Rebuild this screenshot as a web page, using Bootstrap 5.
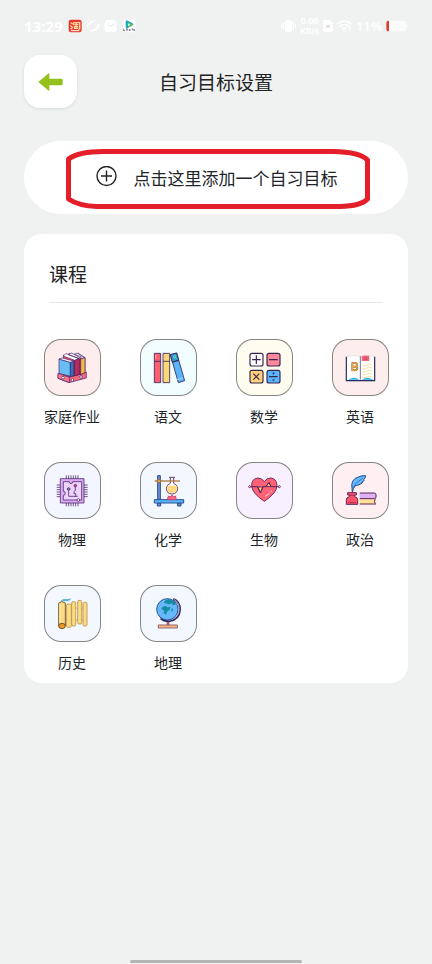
<!DOCTYPE html>
<html lang="zh-CN">
<head>
<meta charset="utf-8">
<meta name="viewport" content="width=device-width, initial-scale=1">
<title>自习目标设置</title>
<link href="https://cdn.jsdelivr.net/npm/bootstrap@5.3.0/dist/css/bootstrap.min.css" rel="stylesheet">
<style>
  body { background: #f0f2f1; color: #222; font-family: "Noto Sans CJK SC", sans-serif; }
  button { color: inherit; }
  .status { height: 51px; color: #fff; font-family: "Open Sans", "Noto Sans CJK SC", sans-serif; }
  .clock { font-size: 15px; line-height: 20px; font-weight: 700; }
  .rate { font-family: Inter, sans-serif; font-size: 8px; line-height: 10px; font-weight: 700; }
  .charge { font-size: 13px; line-height: 20px; font-weight: 600; }
  .topbar { display: grid; grid-template-columns: 53px 1fr 53px; margin-top: 4px; }
  .back-btn { width: 53px; height: 53px; border-radius: 16px; box-shadow: 0 1px 3px rgba(40, 60, 80, .12); }
  .page-title { font-size: 19px; line-height: 28px; font-weight: 400; }
  .add-btn { height: 73px; margin-top: 33px; font-size: 17px; line-height: 24px; gap: 16px; }
  .course-panel { margin-top: 20px; border-radius: 18px; padding-bottom: 10px; }
  .panel-head { margin: 0 25px; padding-top: 26px; height: 69px; border-bottom: 1px solid #e6e7e7; }
  .panel-title { font-size: 19px; line-height: 28px; font-weight: 400; }
  .courses { padding-top: 36px; row-gap: 35px; }
  .course { font-size: 14px; line-height: 22px; gap: 9px; }
  .tile { width: 57px; height: 57px; border-radius: 17px; box-shadow: inset 0 0 0 1px #858585; }
  .tile svg { display: block; width: 57px; height: 57px; stroke-linejoin: round; }
  .t-rose { background: #fdeeed; } .t-mint { background: #f1fdff; } .t-cream { background: #fffdf0; }
  .t-blue { background: #f3f8ff; } .t-lilac { background: #f8f0ff; } .t-pink { background: #fdeff2; } .t-peri { background: #f4f6ff; }
  .home-bar { width: 45%; height: 3px; margin-bottom: 1px; background: #b3b5b5; }
</style>
<script src="https://cdn.jsdelivr.net/npm/bootstrap@5.3.0/dist/js/bootstrap.bundle.min.js" defer></script>
</head>
<body>
<div class="min-vh-100 d-flex flex-column px-4">
  <div class="status d-flex align-items-center justify-content-between">
    <div class="d-flex align-items-center">
      <span class="clock me-1">13:29</span>
      <svg width="70" height="16" viewBox="0 0 210 48" aria-hidden="true">
        <rect x="5" y="5" width="39" height="38" rx="7" fill="#e5382c"/>
        <path d="M11 14l6 4M10 23l6 4M11 34l6-6M21 12c-2 5 0 7-3 9M21 14h17v19l-5 1M22 20h12M22 26h12M28 15v15M22 25v6h11" fill="none" stroke="#ffd39a" stroke-width="4"/>
        <path d="M12 38h25" stroke="#fff" stroke-width="3"/>
        <path d="M61 30c-4-14 12-26 27-23-10 4-20 12-27 23zm4 8c16 0 26-10 31-25 8 16-11 34-31 25z" fill="#fff"/>
        <rect x="113" y="6" width="36" height="36" rx="8" fill="#fff"/>
        <path d="M123 17c2 9 14 9 16 0" fill="none" stroke="#dfe2e1" stroke-width="3"/>
        <rect x="168" y="5" width="38" height="38" rx="7" fill="#fff"/>
        <path d="M176 8q3-2 6 0l15 8q4 3 0 6l-15 8q-6 2-6-3z" fill="#18a7d8"/><path d="M181 13l17 6-16 9z" fill="#56c42b"/><path d="M183 16l7 4-7 4z" fill="#fff"/>
        <path d="M170 32v6h4M177 33h6m-3 0v6M186 34l4 4m0-5l-4 6M194 33h4v5m3-5v4h3" fill="none" stroke="#333d4a" stroke-width="2"/>
      </svg>
    </div>
    <div class="d-flex align-items-center gap-1">
      <svg width="15" height="14" viewBox="0 0 45 42" fill="#fff" aria-hidden="true"><rect x="12" y="3" width="21" height="36" rx="5"/><path d="M6 10h4v22H6zM0 16h4v10H0zM35 10h4v22h-4zM41 16h4v10h-4z"/></svg>
      <div class="rate text-center"><div>0.00</div><div>KB/s</div></div>
      <svg width="10" height="12" viewBox="0 0 30 36" aria-hidden="true"><path d="M5 0h15l10 9v22q0 5-5 5H5q-5 0-5-5V5q0-5 5-5z" fill="#fff"/><path d="M10 14l10 10m0-10L10 24" stroke="#c9cdcc" stroke-width="3"/></svg>
      <svg width="15" height="12" viewBox="0 0 45 36" fill="none" stroke="#fff" stroke-width="5" aria-hidden="true"><path d="M2 12Q22-6 43 12M8 20Q22 7 36 20M15 27Q22 21 29 27"/><circle cx="22" cy="32" r="1"/><path d="M38 21v12" stroke-dasharray="5 3"/></svg>
      <span class="charge">11%</span>
      <svg width="22" height="12" viewBox="0 0 66 36" aria-hidden="true"><rect x="2" y="2" width="58" height="32" rx="8" fill="#fbfbfb"/><path d="M61 12q5 1 5 6t-5 6z" fill="#fbfbfb"/><path d="M9 2v32Q1 34 1 27V9q0-7 8-7z" fill="#e13b33"/></svg>
    </div>
  </div>

  <header class="topbar align-items-center">
    <button type="button" class="back-btn btn bg-white border-0 p-0 d-flex align-items-center justify-content-center" aria-label="返回">
      <svg width="25" height="18" viewBox="0 0 75 54" aria-hidden="true"><path d="M1 27L32 1q2-1 2 2v14h36q4 0 4 4v12q0 4-4 4H34v14q0 3-2 2z" fill="#94c11b"/></svg>
    </button>
    <h1 class="page-title text-center mb-0">自习目标设置</h1>
  </header>

  <main>
    <button type="button" class="add-btn btn bg-white border-0 rounded-pill w-100 p-0 position-relative d-flex align-items-center justify-content-center">
      <svg width="23" height="23" viewBox="0 0 23 23" fill="none" stroke="#222" aria-hidden="true"><circle cx="11.500" cy="10" r="9.500" stroke-width="1.400"/><path d="M6 10h11M11.500 4.500v11" stroke-width="1.400"/></svg>
      <span>点击这里添加一个自习目标</span>
      <svg class="position-absolute top-0 start-0 w-100 h-100" viewBox="0 0 384 73" fill="none" stroke="#e51f29" stroke-width="5" stroke-linejoin="round" aria-hidden="true"><path d="M44.500 18Q55 10.500 79 10.500H309Q336 11 343.500 19V58Q337 65 316 65.500H73Q55 65 44.500 58Z"/></svg>
    </button>

    <section class="course-panel bg-white">
      <div class="panel-head"><h2 class="panel-title mb-0">课程</h2></div>
      <div class="courses row row-cols-4 gx-0">
        <div class="col"><button type="button" class="course btn border-0 p-0 w-100 d-flex flex-column align-items-center">
          <span class="tile t-rose"><svg viewBox="40 27 171 171" stroke="#46206b" stroke-width="2" aria-hidden="true">
            <path d="M82 131l33 11 52-16v18l-52 14-33-13z" fill="#f4697a"/><path d="M133 74l10-4 20 13v45l-13 6z" fill="#f4b63f"/><path d="M115 70l18 7 18 8v46l-15 6-19-50z" fill="#bd2f56"/><path d="M150 87l13-4v45l-13 5z" fill="#f3b941"/><path d="M98 75l34 15v47l-16 3-18-7z" fill="#ef536d"/><path d="M132 90l14-4v46l-14 6z" fill="#bf2b58"/><path d="M97 78l9-7 38 14-12 6zM113 74l8-5 32 12-7 5zM131 73l8-4 22 13-9 4z" fill="#fff"/><path d="M85 87l34 10v42l-34-9z" fill="#67bdf4"/><path d="M119 97l10-4v43l-10 4z" fill="#237db7"/><path d="M85 87l10-3 34 9-10 4z" fill="#fff"/><path d="M82 130l34 12v16l-34-13z" fill="#ff7887"/><g fill="#fff"><circle cx="97" cy="143" r="4"/><circle cx="125" cy="150" r="4"/><circle cx="151" cy="141" r="4"/></g>
          </svg></span><span>家庭作业</span></button></div>
        <div class="col"><button type="button" class="course btn border-0 p-0 w-100 d-flex flex-column align-items-center">
          <span class="tile t-mint"><svg viewBox="327 27 171 171" stroke="#3a245d" stroke-width="2.500" aria-hidden="true">
            <path d="M370 70h19v88h-19z" fill="#fb5e6d"/><path d="M396 70h20v88h-20z" fill="#fbd773"/><path d="M418 74l19-5 24 83-19 6z" fill="#58b5f7"/><path d="M418 74l19-5 6 22-19 6z" fill="#2799be"/><path d="M370 94h19M396 94h20M424 96l20-5" fill="none"/><path d="M374 74v13M400 74v13" stroke="#ffb5a8"/><path d="M426 77l5 11M431 74l5 12" stroke="#85d9ea"/><path d="M438 149l17-5" stroke="#bce2ff"/>
          </svg></span><span>语文</span></button></div>
        <div class="col"><button type="button" class="course btn border-0 p-0 w-100 d-flex flex-column align-items-center">
          <span class="tile t-cream"><svg viewBox="40 27 171 171" stroke="#38254e" stroke-width="3.500" aria-hidden="true">
            <rect x="82" y="70" width="39" height="38" rx="6" fill="#fff"/><rect x="133" y="70" width="39" height="38" rx="6" fill="#ff889b"/><rect x="82" y="121" width="39" height="38" rx="6" fill="#ffd17a"/><rect x="133" y="121" width="39" height="38" rx="6" fill="#58b5ff"/>
            <path d="M88 89h26M101 76v26M139 89h26M92 131l18 18m0-18l-18 18M139 140h26" fill="none"/><path d="M150 130h5M150 150h5" stroke-width="5"/>
          </svg></span><span>数学</span></button></div>
        <div class="col"><button type="button" class="course btn border-0 p-0 w-100 d-flex flex-column align-items-center">
          <span class="tile t-rose"><svg viewBox="327 27 171 171" fill="none" aria-hidden="true">
            <path d="M370 79q24-7 42 1 19-8 43-1v73h-85z" fill="#fff" stroke="#d3d7e0" stroke-width="2"/><path d="M370 80v72h85V80" stroke="#292965" stroke-width="3.500"/><path d="M412 79v70" stroke="#56568a" stroke-width="2.500"/><path d="M375 149q20-11 34 0zm41 0q17-11 35 0z" fill="#27b6df"/><path d="M416 79q11-5 23-1v15h-23z" fill="#ef6879"/><path d="M421 83h13M421 88h13" stroke="#c93d66" stroke-width="2"/>
            <path d="M388 99v22h7q8 0 8-6 0-4-5-5 4-1 4-6 0-5-7-5zm0 11h9" stroke="#a76c32" stroke-width="6"/><path d="M388 99v22h7q8 0 8-6 0-4-5-5 4-1 4-6 0-5-7-5zm0 11h9" stroke="#ffc15b" stroke-width="2.500"/>
            <path d="M418 106q8 5 15-1t15 1M418 115q8 5 15-1t15 1M418 124q8 5 15-1t15 1M418 133q8 5 15-1t15 1M418 142q8 3 15-1t15 0" stroke="#f8ce79" stroke-width="2"/>
          </svg></span><span>英语</span></button></div>

        <div class="col"><button type="button" class="course btn border-0 p-0 w-100 d-flex flex-column align-items-center">
          <span class="tile t-peri"><svg viewBox="40 20 171 171" fill="none" stroke="#54306f" stroke-width="2.500" aria-hidden="true">
            <path d="M107 60v11M114 60v11M121 60v11M128 60v11M135 60v11M142 60v11M107 142v11M114 142v11M121 142v11M128 142v11M135 142v11M142 142v11M78 89h11M78 96h11M78 103h11M78 110h11M78 117h11M78 124h11M160 89h11M160 96h11M160 103h11M160 110h11M160 117h11M160 124h11"/>
            <path d="M89 70h71v73H89z" fill="#dcaaf5"/><path d="M98 79h18q0 6 5 6t5-6h27v55H98v-14q6 0 6-6t-6-6z" fill="#eed3ff"/><path d="M114 105v18h27M134 95v9l-4 6v5h5v9"/><circle cx="114" cy="101" r="4" fill="#5484d4"/><circle cx="134" cy="91" r="4" fill="#e74b78"/><circle cx="143" cy="134" r="4" fill="#fff"/>
          </svg></span><span>物理</span></button></div>
        <div class="col"><button type="button" class="course btn border-0 p-0 w-100 d-flex flex-column align-items-center">
          <span class="tile t-blue"><svg viewBox="327 20 171 171" stroke="#284e92" stroke-width="3" aria-hidden="true">
            <path d="M380 61h8v73h-8zM379 143h10v9h-10zM440 143h10v9h-10z" fill="#718fd6"/><path d="M370 133h88v10h-88z" fill="#56b6fa"/>
            <path d="M414 66h18M418 67v17q-11 4-12 15 1 17 17 17t17-17q-1-11-12-15V67" fill="#fff" stroke="#65416e"/><path d="M409 93q14-5 29 0 3 19-15 21-17-1-14-21z" fill="#ffd67a" stroke="none"/><g fill="#fff3bf" stroke="none"><circle cx="419" cy="100" r="2"/><circle cx="428" cy="104" r="2"/><circle cx="425" cy="90" r="2"/></g>
            <path d="M371 77h76" stroke="#ab7b40" stroke-width="4"/><path d="M379 73h10v9h-10z" fill="#d6a461" stroke="#9c6c3e"/><path d="M411 133q-3-6 2-11l5 3 5-6 4 6 6-3q4 7 1 11z" fill="#f76887" stroke="#d34671"/>
          </svg></span><span>化学</span></button></div>
        <div class="col"><button type="button" class="course btn border-0 p-0 w-100 d-flex flex-column align-items-center">
          <span class="tile t-lilac"><svg viewBox="40 20 171 171" stroke="#702d5a" stroke-width="3" aria-hidden="true">
            <path d="M125 138Q87 113 87 90q0-20 19-22 12 0 19 11 7-11 19-11 18 2 19 22 0 23-38 48z" fill="#ff6177"/><path d="M104 95h17l-8 18zM130 93l9-12 6 13z" fill="#ffd168"/><path d="M83 94h22l8 18 8-18h9l9-12 6 12h23" fill="none" stroke="#54255f"/><circle cx="81" cy="94" r="3" fill="#fff"/><circle cx="170" cy="94" r="3" fill="#fff"/><path d="M128 123l12-9M144 110l3-4" stroke="#ffe4e8"/>
          </svg></span><span>生物</span></button></div>
        <div class="col"><button type="button" class="course btn border-0 p-0 w-100 d-flex flex-column align-items-center">
          <span class="tile t-pink"><svg viewBox="327 20 171 171" stroke="#5e2557" stroke-width="3" aria-hidden="true">
            <path d="M387 100q-5-28 19-35 11-5 22-4-1 8-6 12l2 2-7 5 1 3q-10 7-21 8-7 8-9 20z" fill="#64baff" stroke="#294a88"/><path d="M389 98q10-19 30-29" fill="none" stroke="#305691" stroke-width="2"/><path d="M374 112h26v7h-5v5q9 2 9 9v14h-34v-14q0-7 9-9v-5h-5z" fill="#ff5267"/><path d="M379 120h16M376 142h22" stroke="#a92759"/>
            <path d="M410 113h44q5 0 5 5v7q0 5-5 5h-44z" fill="#dfb0f5" stroke="none"/><path d="M410 131h45v15h-45z" fill="#ffe19a" stroke="none"/><path d="M410 113h44q5 0 5 5v7q0 5-5 5h-44M410 146h49M457 131q-6 7 0 14" fill="none"/>
          </svg></span><span>政治</span></button></div>

        <div class="col"><button type="button" class="course btn border-0 p-0 w-100 d-flex flex-column align-items-center">
          <span class="tile t-blue"><svg viewBox="40 19 171 171" stroke="#b98f45" stroke-width="2.500" fill="#fbdc83" aria-hidden="true">
            <path d="M106 88h60M106 124h60" stroke="#d3985c"/><rect x="107" y="76" width="15" height="70" rx="5"/><rect x="123" y="69" width="12" height="73" rx="4"/><rect x="141" y="65" width="12" height="71" rx="4"/><rect x="157" y="71" width="12" height="71" rx="4"/>
            <path d="M84 73q10-9 20 0v69H84z" stroke="#5e4528"/><path d="M88 75v59" stroke="#fff1bf"/><ellipse cx="94" cy="142" rx="10" ry="8" fill="#e89a24" stroke="#5e4528"/><path d="M91 67l7-4h14l7-2-5 5H97" fill="none" stroke="#2b9ec7"/>
          </svg></span><span>历史</span></button></div>
        <div class="col"><button type="button" class="course btn border-0 p-0 w-100 d-flex flex-column align-items-center">
          <span class="tile t-blue"><svg viewBox="327 19 171 171" aria-hidden="true">
            <path d="M427 61q20 8 20 32-2 31-34 35-15 0-24-9" fill="none" stroke="#30265f" stroke-width="6"/><path d="M428 61q17 10 17 32-3 29-33 32" fill="none" stroke="#c3c5f4" stroke-width="2"/><circle cx="409" cy="92" r="32" fill="#65b9fa" stroke="#285491" stroke-width="3"/>
            <path d="M402 66l11-5 16 7 5 10-8 2-4-6-9 3-8-3-6-1zM393 86l11-5 5 5 10-1-3 8-8 6-3 10-7-6 1-8-8-3zM421 91l5-2-1 7-3 4z" fill="#168ba4"/><path d="M407 130h8v9h-8z" fill="#aa5265"/><path d="M382 139h57v9h-57z" fill="#f8b487" stroke="#92646d" stroke-width="3"/>
          </svg></span><span>地理</span></button></div>
      </div>
    </section>
  </main>
  <div class="home-bar rounded-pill mt-auto mx-auto"></div>
</div>
</body>
</html>
